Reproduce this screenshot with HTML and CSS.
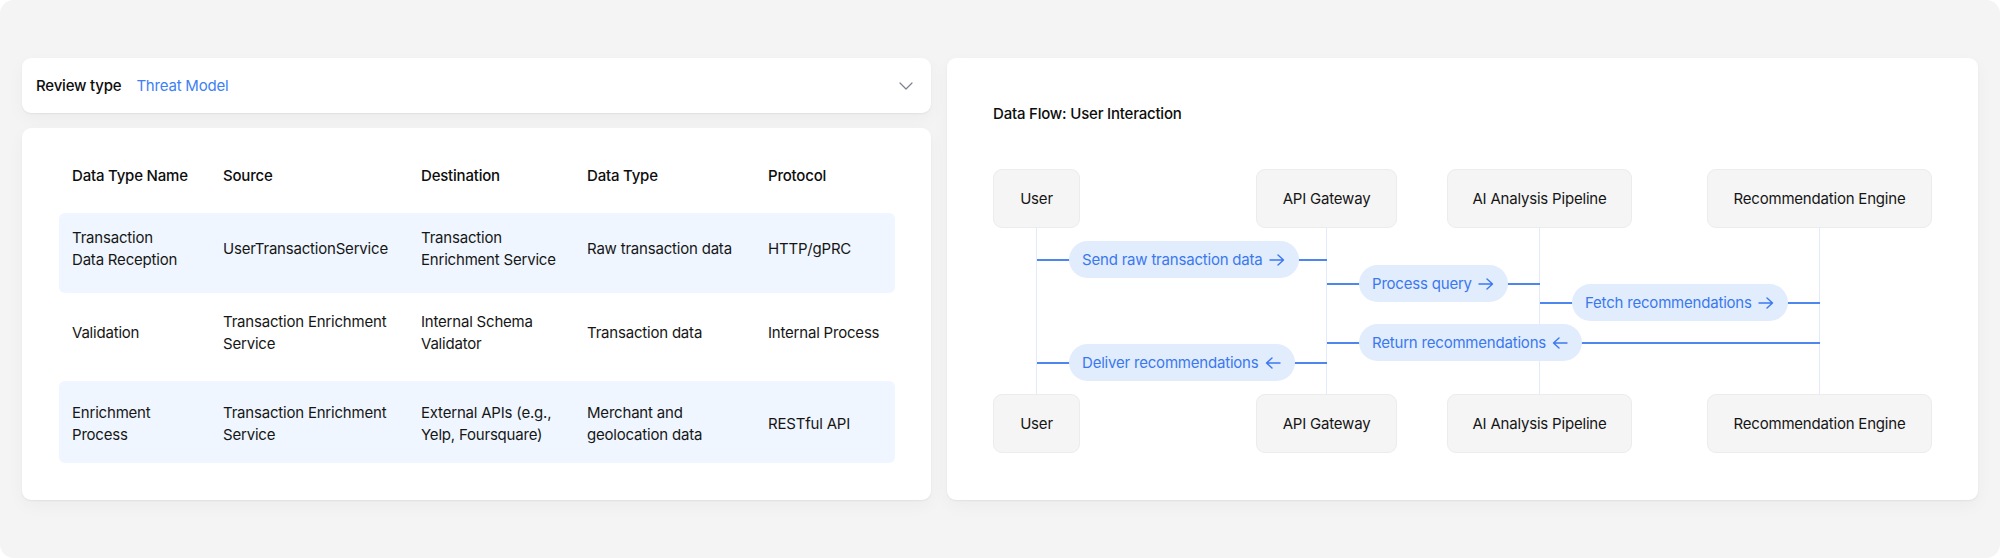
FILE: index.html
```html
<!DOCTYPE html>
<html lang="en">
<head>
<meta charset="utf-8">
<title>Threat Model Review</title>
<link rel="stylesheet" href="styles.css">
</head>
<body>
<div class="page">
  <div class="left-col">
    <div class="card review">
      <span class="review-label">Review type</span>
      <span class="review-value">Threat Model</span>
      <svg class="chevron" width="14" height="8" viewBox="0 0 14 8"><polyline points="1,1 7,7 13,1" fill="none" stroke="currentColor" stroke-width="1.2" stroke-linecap="round" stroke-linejoin="round"/></svg>
    </div>
    <div class="card table-card">
      <table class="flows">
        <colgroup>
          <col class="c1"><col class="c2"><col class="c3"><col class="c4"><col class="c5">
        </colgroup>
        <thead>
          <tr><th>Data Type Name</th><th>Source</th><th>Destination</th><th>Data Type</th><th>Protocol</th></tr>
        </thead>
        <tbody>
          <tr class="hl r1"><td>Transaction Data Reception</td><td>UserTransactionService</td><td>Transaction Enrichment Service</td><td>Raw transaction data</td><td>HTTP/gPRC</td></tr>
          <tr class="r2"><td>Validation</td><td>Transaction Enrichment Service</td><td>Internal Schema Validator</td><td>Transaction data</td><td>Internal Process</td></tr>
          <tr class="hl r3"><td>Enrichment Process</td><td>Transaction Enrichment Service</td><td>External APIs (e.g., Yelp, Foursquare)</td><td>Merchant and geolocation data</td><td>RESTful API</td></tr>
        </tbody>
      </table>
    </div>
  </div>

  <div class="card flow-card">
    <div class="flow-title">Data Flow: User Interaction</div>
    <div class="diagram">
      <div class="part p-user">
        <div class="box">User</div>
        <div class="lifeline"></div>
        <div class="box">User</div>
      </div>
      <div class="part p-api">
        <div class="box">API Gateway</div>
        <div class="lifeline"></div>
        <div class="box">API Gateway</div>
      </div>
      <div class="part p-ai">
        <div class="box">AI Analysis Pipeline</div>
        <div class="lifeline"></div>
        <div class="box">AI Analysis Pipeline</div>
      </div>
      <div class="part p-rec">
        <div class="box">Recommendation Engine</div>
        <div class="lifeline"></div>
        <div class="box">Recommendation Engine</div>
      </div>

      <div class="msg m1"><span class="pill">Send raw transaction data <svg class="arr" width="16" height="12" viewBox="0 0 16 12"><path d="M1 6h13.5M9 1l5.5 5L9 11" fill="none" stroke="currentColor" stroke-width="1.4" stroke-linecap="round" stroke-linejoin="round"/></svg></span></div>
      <div class="msg m2"><span class="pill">Process query <svg class="arr" width="16" height="12" viewBox="0 0 16 12"><path d="M1 6h13.5M9 1l5.5 5L9 11" fill="none" stroke="currentColor" stroke-width="1.4" stroke-linecap="round" stroke-linejoin="round"/></svg></span></div>
      <div class="msg m3"><span class="pill">Fetch recommendations <svg class="arr" width="16" height="12" viewBox="0 0 16 12"><path d="M1 6h13.5M9 1l5.5 5L9 11" fill="none" stroke="currentColor" stroke-width="1.4" stroke-linecap="round" stroke-linejoin="round"/></svg></span></div>
      <div class="msg m4"><span class="pill">Return recommendations <svg class="arr" width="16" height="12" viewBox="0 0 16 12"><path d="M15 6H1.5M7 1L1.5 6 7 11" fill="none" stroke="currentColor" stroke-width="1.4" stroke-linecap="round" stroke-linejoin="round"/></svg></span></div>
      <div class="msg m5"><span class="pill">Deliver recommendations <svg class="arr" width="16" height="12" viewBox="0 0 16 12"><path d="M15 6H1.5M7 1L1.5 6 7 11" fill="none" stroke="currentColor" stroke-width="1.4" stroke-linecap="round" stroke-linejoin="round"/></svg></span></div>
    </div>
  </div>
</div>
</body>
</html>
```
FILE: styles.css
```css
html, body {
  margin: 0;
  padding: 0;
  background: #ffffff;
}

body {
  font-family: Inter, "Liberation Sans", Arial, sans-serif;
  font-size: 15px;
  letter-spacing: -0.2px;
  color: #151515;
  -webkit-font-smoothing: antialiased;
}

.page {
  box-sizing: border-box;
  width: 2000px;
  height: 558px;
  background: #f4f4f4;
  border-radius: 14px;
  padding: 58px 22px 0;
  display: flex;
  align-items: flex-start;
  gap: 16px;
}

.card {
  background: #ffffff;
  border-radius: 9px;
  box-shadow: 0 1px 2px rgba(0, 0, 0, 0.06), 0 6px 18px rgba(0, 0, 0, 0.035);
  box-sizing: border-box;
}

.left-col {
  width: 909px;
  display: flex;
  flex-direction: column;
  gap: 15px;
}

/* Review type select */
.review {
  height: 55px;
  display: flex;
  align-items: center;
  padding: 0 18px 0 14px;
  line-height: 20px;
}

.review-label {
  font-weight: 450;
  color: #0d0d0d;
}

.review-value {
  margin-left: 15px;
  color: #3d80f4;
}

.chevron {
  margin-left: auto;
  color: #7b8190;
}

/* Table */
.table-card {
  height: 372px;
  padding: 21px 37px 0;
}

.flows {
  width: 836px;
  table-layout: fixed;
  border-collapse: separate;
  border-spacing: 0 4px;
  line-height: 22px;
}

.c1 { width: 151px; }
.c2 { width: 198px; }
.c3 { width: 166px; }
.c4 { width: 181px; }
.c5 { width: 140px; }

.flows th {
  text-align: left;
  font-weight: 450;
  color: #0d0d0d;
  padding: 12px 13px 22px;
  white-space: nowrap;
}

.flows td {
  padding: 14px 13px 22px;
  vertical-align: middle;
  color: #161616;
  height: 44px;
}

.flows td:first-child {
  padding-right: 26px;
}

.flows td:last-child {
  padding-right: 4px;
}

.flows tr.r3 td {
  padding-top: 21px;
  padding-bottom: 17px;
}

.flows tr.hl td {
  background: #eff6ff;
}

.flows tr.hl td:first-child {
  border-radius: 6px 0 0 6px;
}

.flows tr.hl td:last-child {
  border-radius: 0 6px 6px 0;
}

/* Flow diagram card */
.flow-card {
  width: 1031px;
  height: 442px;
  padding: 46px 46px 0;
}

.flow-title {
  font-weight: 450;
  line-height: 20px;
  color: #0d0d0d;
}

.diagram {
  position: relative;
  margin-top: 45px;
  display: flex;
}

.part {
  display: flex;
  flex-direction: column;
  align-items: center;
}

.p-user { width: 87px; }
.p-api { width: 141px; margin-left: 176px; }
.p-ai { width: 185px; margin-left: 50px; }
.p-rec { width: 225px; margin-left: 75px; }

.box {
  box-sizing: border-box;
  width: 100%;
  height: 59px;
  display: flex;
  align-items: center;
  justify-content: center;
  background: #f5f5f5;
  border: 1px solid #ececec;
  border-radius: 9px;
  white-space: nowrap;
  color: #151515;
}

.lifeline {
  width: 1px;
  height: 166px;
  background: #e2ebfa;
}

/* Messages */
.msg {
  position: absolute;
  height: 37px;
  display: flex;
  align-items: center;
  box-sizing: border-box;
  padding-left: 32px;
}

.msg::before {
  content: "";
  position: absolute;
  left: 0;
  right: 0;
  top: 18px;
  height: 2px;
  background: #4d86ee;
}

.pill {
  position: relative;
  height: 37px;
  display: inline-flex;
  align-items: center;
  gap: 6px;
  padding: 0 14px 0 13px;
  border-radius: 19px;
  background: #e1edfd;
  color: #3b78ee;
  white-space: nowrap;
}

.arr {
  display: block;
}

.m1 { top: 72px; left: 44px; width: 290px; }
.m2 { top: 96px; left: 334px; width: 213px; }
.m3 { top: 115px; left: 547px; width: 280px; }
.m4 { top: 155px; left: 334px; width: 493px; }
.m5 { top: 175px; left: 44px; width: 290px; }
```
